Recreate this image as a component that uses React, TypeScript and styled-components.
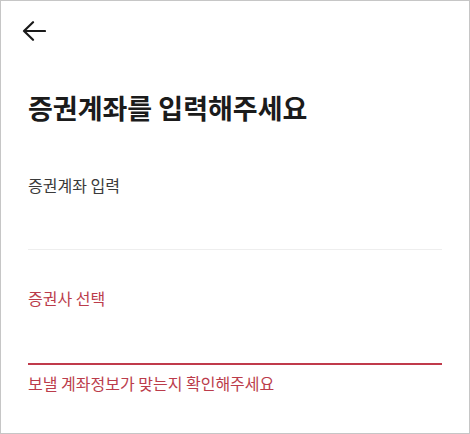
import React from "react";
import styled, { createGlobalStyle } from "styled-components";

const Global = createGlobalStyle`
  html, body { margin: 0; padding: 0; background: #fff; }
  body { font-family: "Noto Sans CJK KR", "Noto Sans", sans-serif; }
  * { box-sizing: border-box; }
`;

const Page = styled.div`
  width: 470px;
  height: 434px;
  border: 1px solid #c6c6c6;
  padding: 0 27px;
  display: flex;
  flex-direction: column;
  overflow: hidden;
  background: #fff;
`;

const Header = styled.header`
  padding-top: 20px;
  display: flex;
  align-items: center;
  margin-left: -6px;
`;

const BackButton = styled.button`
  border: 0;
  background: none;
  padding: 0;
  width: 24px;
  height: 20px;
  display: flex;
  cursor: pointer;
  color: #1a1a1a;
`;

const Title = styled.h1`
  margin: 48px 0 0;
  font-size: 27px;
  line-height: 38px;
  font-weight: 700;
  color: #1b1b1b;
`;

const Field = styled.div<{ $gap: number }>`
  margin-top: ${(p) => p.$gap}px;
  display: flex;
  flex-direction: column;
`;

const Label = styled.label<{ $error?: boolean }>`
  font-size: 16px;
  line-height: 22px;
  color: ${(p) => (p.$error ? "#bb3c4b" : "#3a3a3a")};
`;

const Input = styled.input<{ $error?: boolean }>`
  height: ${(p) => (p.$error ? 56 : 54)}px;
  border: 0;
  border-bottom: ${(p) => (p.$error ? "2px solid #c03a4b" : "1px solid #eeeeee")};
  outline: none;
  padding: 0;
  font-size: 16px;
  font-family: inherit;
  background: transparent;
`;

const ErrorText = styled.p`
  margin: 7px 0 0;
  font-size: 16px;
  line-height: 22px;
  color: #bb3c4b;
`;

export default function App() {
  return (
    <>
      <Global />
      <Page>
        <Header>
          <BackButton aria-label="뒤로">
            <svg width="24" height="20" viewBox="0 0 24 20" fill="none">
              <path
                d="M2 10H23M11 1.2L2 10L11 18.8"
                stroke="currentColor"
                strokeWidth="2.2"
                strokeLinecap="round"
                strokeLinejoin="round"
              />
            </svg>
          </BackButton>
        </Header>
        <Title>증권계좌를 입력해주세요</Title>
        <Field $gap={47}>
          <Label>증권계좌 입력</Label>
          <Input />
        </Field>
        <Field $gap={37}>
          <Label $error>증권사 선택</Label>
          <Input $error />
        </Field>
        <ErrorText>보낼 계좌정보가 맞는지 확인해주세요</ErrorText>
      </Page>
    </>
  );
}
